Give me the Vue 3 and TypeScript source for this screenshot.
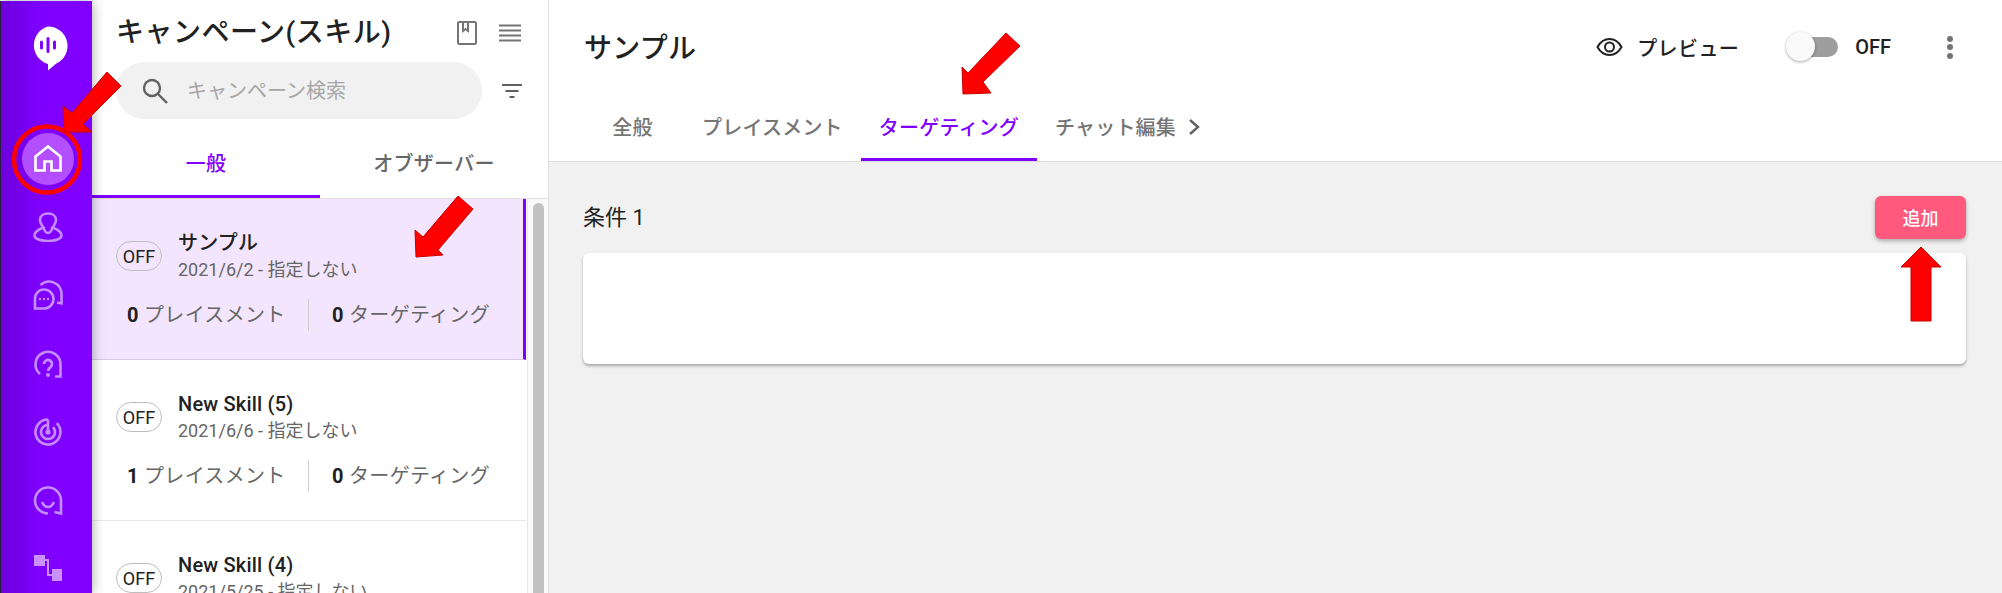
<script setup lang="ts">
const campaigns = [
  { name: 'サンプル', date: '2021/6/2 - 指定しない', placements: 0, targets: 0, active: true },
  { name: 'New Skill (5)', date: '2021/6/6 - 指定しない', placements: 1, targets: 0, active: false },
  { name: 'New Skill (4)', date: '2021/5/25 - 指定しない', placements: 0, targets: 0, active: false },
]
const mainTabs = ['全般', 'プレイスメント', 'ターゲティング', 'チャット編集']
</script>

<template>
  <div class="page">
    <aside class="rail">
      <div class="logo">
        <svg width="42" height="46" viewBox="0 0 42 46">
          <path d="M21 1.500a19.500 19.500 0 0 1 8 37.300L21 45.500v-6.500A19.500 19.500 0 0 1 21 1.500z" fill="#fff" />
          <path d="M14.500 17v6M21 13.500v13M27.500 17v6" stroke="#7f00ff" stroke-width="3" stroke-linecap="round" />
        </svg>
      </div>
      <nav class="rail-nav">
        <div class="rail-item">
          <span class="rail-active">
            <svg width="30" height="30" viewBox="0 0 30 30" fill="none" stroke="#fff" stroke-width="2.600">
              <path d="M2.500 12.500L15 2.500l12.500 10V26.500H18.500V17.500H11.500V26.500H2.500z" />
            </svg>
          </span>
        </div>
        <div class="rail-item">
          <svg width="30" height="30" viewBox="0 0 30 30" fill="none" stroke="#c58cff" stroke-width="2.600">
            <path d="M10.500 15.500C7 17 1.500 19 1.500 23.500 1.500 27 8 29 15 29s13.500-2 13.500-5.500c0-4.500-5.500-6.500-9-8 2-2.500 3.500-5.500 3.500-7.500 0-4-3.500-6.500-8-6.500S7 4 7 8c0 2 1.500 5 3.500 7.500z" />
            <path d="M10.500 15.500c1 3.500 2.500 5.500 4.500 5.500s3.500-2 4.500-5.500" />
          </svg>
        </div>
        <div class="rail-item">
          <svg width="32" height="32" viewBox="0 0 32 32" fill="none" stroke="#c58cff" stroke-width="2.600">
            <path d="M8.500 6A12.500 12.500 0 0 1 29.500 15V24.500L25 23.500" />
            <path d="M12 10.500a9.500 9.500 0 0 1 0 19H3V20a9 9 0 0 1 9-9.500z" />
            <circle cx="8" cy="20" r="1.200" fill="#c58cff" stroke="none" />
            <circle cx="12" cy="20" r="1.200" fill="#c58cff" stroke="none" />
            <circle cx="16" cy="20" r="1.200" fill="#c58cff" stroke="none" />
          </svg>
        </div>
        <div class="rail-item">
          <svg width="32" height="32" viewBox="0 0 32 32" fill="none" stroke="#c58cff" stroke-width="2.600">
            <path d="M8 26A12.500 12.500 0 1 1 28.500 16.500V28.500H23" />
            <path d="M12 16a4 4 0 1 1 6.500 3.100c-1.500 1.100-2.500 2-2.500 3.900" stroke-width="2.800" />
            <circle cx="16" cy="27" r="2" fill="#c58cff" stroke="none" />
          </svg>
        </div>
        <div class="rail-item">
          <svg width="30" height="30" viewBox="0 0 30 30" fill="none" stroke="#c58cff" stroke-width="2.600">
            <path d="M15 2.500A12.500 12.500 0 1 0 23.800 6.200" />
            <path d="M15 8A7 7 0 1 0 20 10.100" />
            <path d="M15 2.500V15" />
            <circle cx="15" cy="15" r="2.600" fill="#c58cff" stroke="none" />
          </svg>
        </div>
        <div class="rail-item">
          <svg width="32" height="32" viewBox="0 0 32 32" fill="none" stroke="#c58cff" stroke-width="2.600">
            <path d="M16 29.500A13 13 0 1 1 29 16.500V29.500L22.500 28" />
            <path d="M10 18c1.500 3.500 3.500 5 6 5s4.500-1.500 6-5" />
          </svg>
        </div>
        <div class="rail-item">
          <svg width="30" height="28" viewBox="0 0 30 28" fill="none">
            <rect x="1" y="1" width="11" height="11" fill="#cb8fff" />
            <rect x="19" y="15" width="10" height="12" fill="#cb8fff" />
            <path d="M12 6h3v15h4" stroke="#cb8fff" stroke-width="2" />
          </svg>
        </div>
      </nav>
    </aside>

    <section class="panel">
      <div class="panel-top">
        <h2 class="panel-title">キャンペーン(スキル)</h2>
        <svg class="book" width="20" height="24" viewBox="0 0 20 24" fill="none" stroke="#757575" stroke-width="2">
          <rect x="1" y="1" width="18" height="22" rx="1.500" />
          <path d="M6 1v9l2.500-2 2.500 2V1" />
        </svg>
        <svg width="22" height="18" viewBox="0 0 22 18" fill="none" stroke="#757575" stroke-width="2">
          <path d="M0 1.500h22M0 6.500h22M0 11.500h22M0 16.500h22" />
        </svg>
      </div>
      <div class="search-row">
        <div class="search">
          <svg width="26" height="26" viewBox="0 0 26 26" fill="none" stroke="#616161" stroke-width="2.400">
            <circle cx="10" cy="10" r="8" />
            <path d="M16 16l9 9" />
          </svg>
          <span class="placeholder">キャンペーン検索</span>
        </div>
        <svg width="20" height="14" viewBox="0 0 20 14" fill="none" stroke="#616161" stroke-width="2">
          <path d="M0 1h20M3.500 7h13M7.500 13h5" />
        </svg>
      </div>
      <div class="panel-tabs">
        <div class="panel-tab on">一般</div>
        <div class="panel-tab">オブザーバー</div>
      </div>
      <div class="list-wrap">
        <div class="list">
          <article v-for="c in campaigns" :key="c.name" class="item" :class="{ active: c.active }">
            <div class="item-head">
              <span class="pill">OFF</span>
              <div>
                <div class="item-name">{{ c.name }}</div>
                <div class="item-date">{{ c.date }}</div>
              </div>
            </div>
            <div class="stats">
              <div class="stat first"><b>{{ c.placements }}</b> プレイスメント</div>
              <div class="stat"><b>{{ c.targets }}</b> ターゲティング</div>
            </div>
          </article>
        </div>
        <div class="scrollbar"><div class="thumb"></div></div>
      </div>
    </section>

    <main class="main">
      <header class="main-head">
        <div class="main-top">
          <h1 class="main-title">サンプル</h1>
          <div class="actions">
            <svg width="27" height="20" viewBox="0 0 27 20" fill="none" stroke="#212121" stroke-width="2">
              <path d="M1.500 10C4.500 4.500 8.500 2 13.500 2s9 2.500 12 8c-3 5.500-7 8-12 8s-9-2.500-12-8z" />
              <circle cx="13.500" cy="10" r="4.500" />
            </svg>
            <span class="preview">プレビュー</span>
            <div class="switch"><span class="knob"></span></div>
            <span class="state">OFF</span>
            <div class="kebab"><i></i><i></i><i></i></div>
          </div>
        </div>
        <div class="main-tabs">
          <div v-for="(t, i) in mainTabs" :key="t" class="main-tab" :class="{ on: i === 2, first: i === 0 }">{{ t }}</div>
          <svg class="chev" width="12" height="16" viewBox="0 0 12 16" fill="none" stroke="#616161" stroke-width="2.400">
            <path d="M2 1l8 7-8 7" />
          </svg>
        </div>
      </header>
      <div class="content">
        <div class="cond-row">
          <span class="cond">条件 1</span>
          <button class="add">追加</button>
        </div>
        <div class="card"></div>
      </div>
    </main>

    <!-- annotation arrows drawn over the screenshot -->
    <svg class="marks" width="2002" height="593" viewBox="0 0 2002 593">
      <circle cx="47" cy="159.500" r="33" fill="none" stroke="#f00" stroke-width="4.500" />
      <g fill="#f00" stroke="#c80000" stroke-width="1">
        <path d="M107 72L121 86 83 124 92 132 64 132 63 106 72 113z" />
        <path d="M458 196L473 209 438 250 443 255 416 257 415 230 423 237z" />
        <path d="M1006 33L1020 46 983 82 991 93 963 94 962 67 968 73z" />
        <path d="M1921 247L1941 267H1931V321H1911V267H1901z" />
      </g>
    </svg>
  </div>
</template>

<style>
html,
body {
  margin: 0;
  overflow: hidden;
}
</style>

<style scoped>
.page {
  position: relative;
  display: flex;
  height: 593px;
  overflow: hidden;
  font-family: Roboto, 'Noto Sans CJK JP', sans-serif;
  color: #212121;
  background: #fff;
}

.rail {
  position: relative;
  z-index: 2;
  flex: 0 0 91px;
  margin-top: 1px;
  border-left: 1px solid #2b1a3d;
  background: linear-gradient(90deg, #6c00dc, #7f00ff 45%);
  box-shadow: 0 0 12px rgba(0, 0, 0, 0.35);
}

.logo {
  display: flex;
  justify-content: center;
  padding: 24px 0 0 2px;
  height: 99px;
  box-sizing: border-box;
}

.rail-item {
  display: flex;
  align-items: center;
  justify-content: center;
  height: 68.2px;
}

.rail-nav {
  margin-top: 25px;
  padding-left: 2px;
}

.rail-active {
  display: flex;
  align-items: center;
  justify-content: center;
  width: 52px;
  height: 52px;
  border-radius: 50%;
  background: #b44fff;
}

.panel {
  display: flex;
  flex-direction: column;
  flex: 0 0 457px;
  box-sizing: border-box;
  border-right: 1px solid #e0e0e0;
}

.panel-top {
  display: flex;
  align-items: center;
  height: 62px;
  padding: 4px 27px 0 24px;
  box-sizing: border-box;
}

.panel-title {
  flex: 1;
  margin: 0;
  font-size: 28px;
  font-weight: 500;
  line-height: 36px;
  letter-spacing: 0.5px;
  white-space: nowrap;
}

.book {
  margin-right: 22px;
}

.search-row {
  display: flex;
  align-items: center;
  justify-content: space-between;
  padding: 0 26px 0 24px;
}

.search {
  display: flex;
  align-items: center;
  width: 366px;
  height: 57px;
  padding-left: 26px;
  box-sizing: border-box;
  border-radius: 29px;
  background: #f1f1f1;
}

.placeholder {
  margin-left: 19px;
  padding-bottom: 2px;
  font-size: 20px;
  color: #a6a6a6;
}

.panel-tabs {
  display: flex;
  height: 79px;
  border-bottom: 1px solid #e0e0e0;
}

.panel-tab {
  flex: 1;
  display: flex;
  align-items: center;
  justify-content: center;
  padding-top: 8px;
  font-size: 20px;
  font-weight: 500;
  letter-spacing: 0.3px;
  color: #666;
}

.panel-tab.on {
  color: #7f00ff;
  box-shadow: inset 0 -3px 0 #7f00ff;
}

.list-wrap {
  flex: 1;
  display: flex;
  min-height: 0;
}

.list {
  flex: 0 0 434px;
}

.item {
  height: 161px;
  box-sizing: border-box;
  padding: 31px 0 0 24px;
  border-bottom: 1px solid #e9e9e9;
}

.item.active {
  background: #f3e5fd;
  border-right: 3px solid #7f00ff;
  border-bottom-color: #d9c8e6;
}

.item-head {
  display: flex;
  align-items: center;
  gap: 16px;
}

.pill {
  display: flex;
  align-items: center;
  justify-content: center;
  width: 46px;
  height: 30px;
  box-sizing: border-box;
  border: 1px solid #bdbdbd;
  border-radius: 15px;
  font-size: 18px;
  color: #212121;
}

.item-name {
  font-size: 20px;
  font-weight: 500;
  line-height: 26px;
  letter-spacing: 0.2px;
}

.item-date {
  margin-top: 2px;
  font-size: 18px;
  line-height: 24px;
  color: #666;
}

.stats {
  display: flex;
  margin-top: 17px;
  padding-left: 11px;
}

.stat {
  height: 32px;
  line-height: 32px;
  font-size: 20px;
  letter-spacing: 0.3px;
  color: #666;
  white-space: nowrap;
}

.stat b {
  font-weight: 700;
  color: #212121;
}

.stat.first {
  width: 181px;
  border-right: 1px solid #cfcfcf;
  margin-right: 23px;
}

.scrollbar {
  flex: 1;
  margin-left: 1px;
  padding: 4px 4px 0 5px;
  border-left: 1px solid #e8e8e8;
  background: #fafafa;
}

.thumb {
  height: 600px;
  border-radius: 6px;
  background: #c1c1c1;
}

.main {
  flex: 1;
  display: flex;
  flex-direction: column;
  min-width: 0;
}

.main-head {
  height: 162px;
  box-sizing: border-box;
  border-bottom: 1px solid #dcdcdc;
}

.main-top {
  display: flex;
  align-items: center;
  justify-content: space-between;
  height: 94px;
  padding: 0 49px 0 35px;
}

.main-title {
  margin: 0 0 2px;
  font-size: 28px;
  font-weight: 500;
  letter-spacing: 0.3px;
}

.actions {
  display: flex;
  align-items: center;
}

.preview {
  margin-left: 14px;
  font-size: 20px;
  font-weight: 500;
  letter-spacing: 0.4px;
}

.switch {
  position: relative;
  width: 47px;
  height: 20px;
  margin-left: 52px;
  border-radius: 10px;
  background: #9e9e9e;
}

.knob {
  position: absolute;
  left: -5px;
  top: -5px;
  width: 29px;
  height: 29px;
  border-radius: 50%;
  background: #fafafa;
  box-shadow: 0 1px 3px rgba(0, 0, 0, 0.35);
}

.state {
  margin-left: 17px;
  font-size: 20px;
  font-weight: 500;
}

.kebab {
  display: flex;
  flex-direction: column;
  gap: 2.5px;
  margin-left: 56px;
}

.kebab i {
  width: 6px;
  height: 6px;
  border-radius: 50%;
  background: #757575;
}

.main-tabs {
  display: flex;
  align-items: stretch;
  height: 67px;
  padding-left: 32px;
}

.main-tab {
  display: flex;
  align-items: center;
  justify-content: center;
  padding: 0 18px 2px;
  font-size: 20px;
  font-weight: 500;
  letter-spacing: 0.2px;
  color: #757575;
  white-space: nowrap;
}

.main-tab.first {
  width: 103px;
  box-sizing: border-box;
}

.main-tab.on {
  color: #7f00ff;
  box-shadow: inset 0 -3px 0 #7f00ff;
}

.chev {
  align-self: center;
  margin: 0 0 2px -6px;
}

.content {
  flex: 1;
  padding: 34px 36px 0 34px;
  background: #f1f1f1;
}

.cond-row {
  display: flex;
  align-items: center;
  justify-content: space-between;
  height: 43px;
}

.cond {
  padding-bottom: 5px;
  font-size: 22px;
}

.add {
  width: 91px;
  height: 43px;
  padding: 0 0 2px;
  border: none;
  border-radius: 6px;
  background: #ff5a7d;
  color: #fff;
  font-family: inherit;
  font-size: 18px;
  font-weight: 500;
  box-shadow: 0 2px 4px rgba(0, 0, 0, 0.3);
}

.card {
  height: 111px;
  margin-top: 14px;
  border-radius: 6px;
  background: #fff;
  box-shadow: 0 2px 3px rgba(0, 0, 0, 0.3);
}

.marks {
  position: absolute;
  left: 0;
  top: 0;
  z-index: 3;
  pointer-events: none;
}
</style>
